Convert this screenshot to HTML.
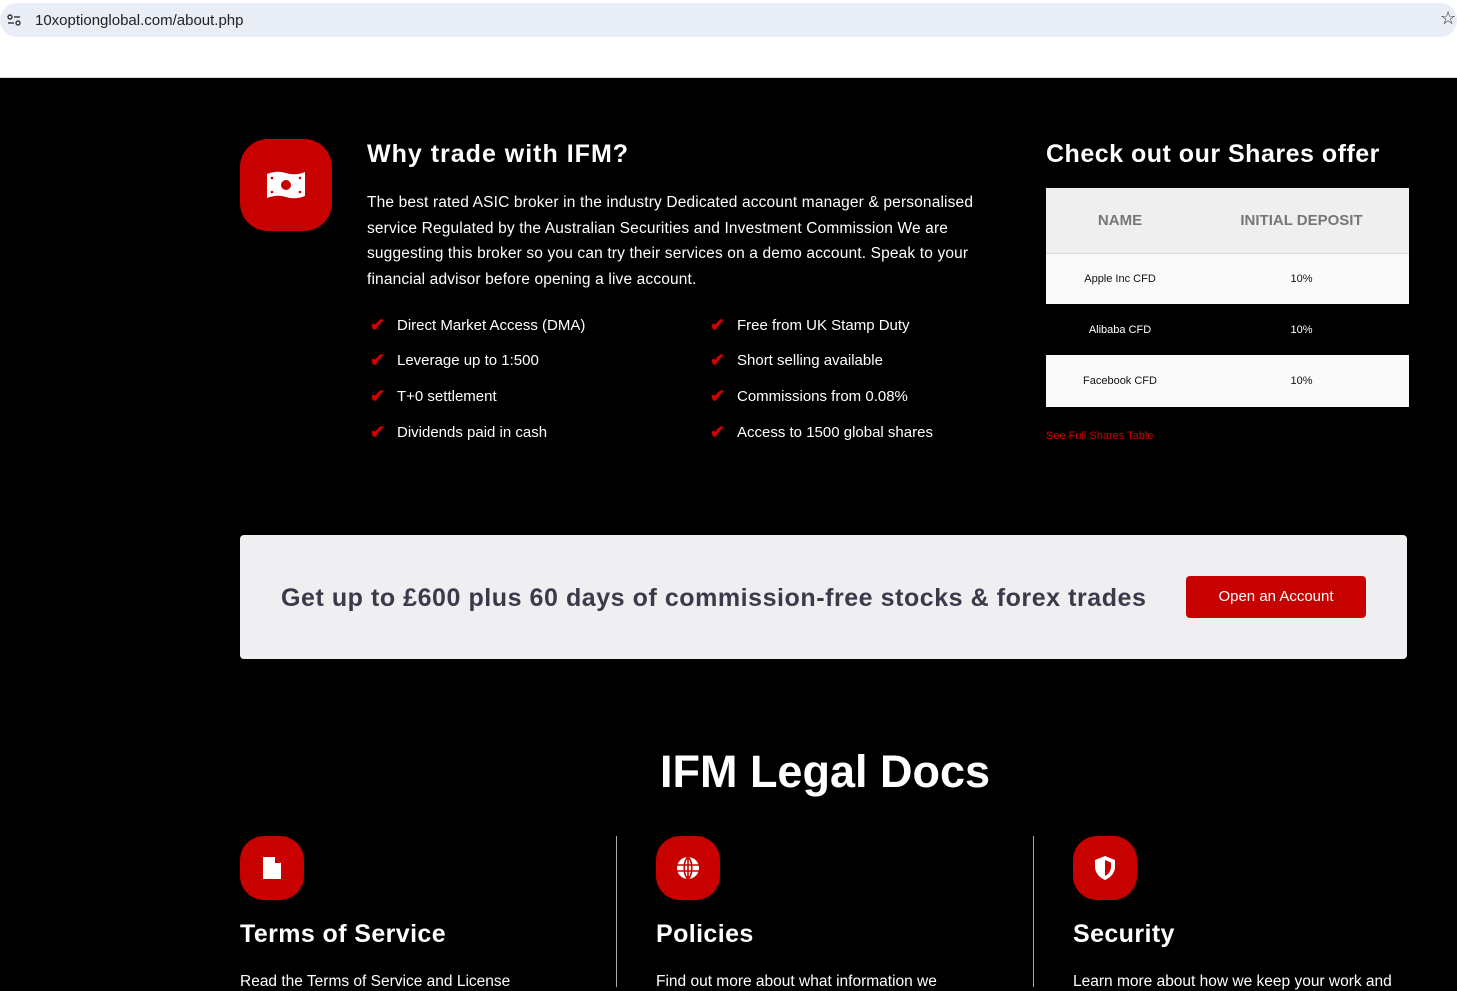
<!DOCTYPE html>
<html><head><meta charset="utf-8"><style>
*{margin:0;padding:0;box-sizing:border-box}
body{width:1457px;height:987px;overflow:hidden;background:#000;font-family:"Liberation Sans",sans-serif;color:#fff;position:relative}
.bar{position:absolute;top:0;left:0;width:1457px;height:78px;background:#fff;border-bottom:1px solid #ddd}
.url{position:absolute;top:3px;left:0;width:1457px;height:34px;background:#e9edf6;border-radius:17px}
.url span{position:absolute;left:35px;top:9px;font-size:15px;color:#222}
.ab{position:absolute}
.ico{background:#c70000;border-radius:24px;display:flex;align-items:center;justify-content:center}
.li{position:absolute;font-size:15px;color:#fff}
.li:before{content:"✔";color:#d40000;position:absolute;left:-27px;top:-2px;font-size:18px;font-weight:bold}
table{border-collapse:collapse}
</style></head><body>
<div class="bar"><div class="url">
<svg style="position:absolute;left:7px;top:11px" width="14" height="12" viewBox="0 0 14 12"><circle cx="3" cy="3" r="2" fill="none" stroke="#333" stroke-width="1.4"/><line x1="7" y1="3" x2="13" y2="3" stroke="#333" stroke-width="1.4"/><line x1="1" y1="9" x2="7" y2="9" stroke="#333" stroke-width="1.4"/><circle cx="11" cy="9" r="2" fill="none" stroke="#333" stroke-width="1.4"/></svg>
<span>10xoptionglobal.com/about.php</span>
<span style="left:1440px;top:5px;font-size:18px">☆</span></div></div>

<div class="ab ico" style="left:240px;top:139px;width:92px;height:92px;border-radius:28px">
<svg width="42" height="30" viewBox="0 0 42 30"><path d="M2 4 Q12 0 21 3 Q30 6 40 2 L40 26 Q30 30 21 27 Q12 24 2 28 Z" fill="#fff"/><circle cx="21" cy="15" r="5" fill="#c70000"/><circle cx="7" cy="8" r="1.3" fill="#c70000"/><circle cx="35" cy="22" r="1.3" fill="#c70000"/><circle cx="7" cy="22" r="1.3" fill="#c70000"/><circle cx="35" cy="8" r="1.3" fill="#c70000"/></svg></div>
<div class="ab" style="left:367px;top:140px;font-size:25px;font-weight:bold;letter-spacing:1px">Why trade with IFM?</div>
<div class="ab" style="left:367px;top:190px;width:630px;font-size:15.5px;line-height:25.7px;letter-spacing:0.15px">The best rated ASIC broker in the industry Dedicated account manager &amp; personalised service Regulated by the Australian Securities and Investment Commission We are suggesting this broker so you can try their services on a demo account. Speak to your financial advisor before opening a live account.</div>
<div class="li" style="left:397px;top:317px">Direct Market Access (DMA)</div>
<div class="li" style="left:397px;top:352px">Leverage up to 1:500</div>
<div class="li" style="left:397px;top:388px">T+0 settlement</div>
<div class="li" style="left:397px;top:424px">Dividends paid in cash</div>
<div class="li" style="left:737px;top:317px">Free from UK Stamp Duty</div>
<div class="li" style="left:737px;top:352px">Short selling available</div>
<div class="li" style="left:737px;top:388px">Commissions from 0.08%</div>
<div class="li" style="left:737px;top:424px">Access to 1500 global shares</div>

<div class="ab" style="left:1046px;top:140px;font-size:25px;font-weight:bold;letter-spacing:0.5px">Check out our Shares offer</div>
<table class="ab" style="left:1046px;top:188px;width:363px;font-size:11px;text-align:center">
<tr style="background:#efefef;height:65px;color:#777;font-size:15px;font-weight:bold;border-bottom:1px solid #ddd"><td style="width:148px">NAME</td><td>INITIAL DEPOSIT</td></tr>
<tr style="background:#fafafa;color:#111;height:51px"><td>Apple Inc CFD</td><td>10%</td></tr>
<tr style="height:51px;color:#fff"><td>Alibaba CFD</td><td>10%</td></tr>
<tr style="background:#fafafa;color:#111;height:52px"><td>Facebook CFD</td><td>10%</td></tr>
</table>
<div class="ab" style="left:1046px;top:430px;font-size:11px;color:#d40000">See Full Shares Table</div>

<div class="ab" style="left:240px;top:535px;width:1167px;height:124px;background:#efeff2;border-radius:4px">
<div class="ab" style="left:41px;top:49px;font-size:25px;font-weight:bold;color:#3a3a4a;letter-spacing:0.55px">Get up to £600 plus 60 days of commission-free stocks &amp; forex trades</div>
<div class="ab" style="left:946px;top:41px;width:180px;height:42px;background:#c70000;border-radius:4px;color:#fff;font-size:15px;text-align:center;line-height:42px">Open an Account</div>
</div>

<div class="ab" style="left:0;width:1650px;top:746px;text-align:center;font-size:45px;font-weight:bold">IFM Legal Docs</div>

<div class="ab" style="left:616px;top:836px;width:1px;height:151px;background:#aaa"></div>
<div class="ab" style="left:1033px;top:836px;width:1px;height:151px;background:#aaa"></div>

<div class="ab ico" style="left:240px;top:836px;width:64px;height:64px"><svg width="18" height="22" viewBox="0 0 18 22"><path d="M0 0H12L18 6V22H0Z" fill="#fff"/><path d="M12 0V6H18" fill="#c70000"/></svg></div>
<div class="ab ico" style="left:656px;top:836px;width:64px;height:64px"><svg width="22" height="22" viewBox="0 0 22 22"><circle cx="11" cy="11" r="11" fill="#fff"/><path d="M0 8H22M0 14H22M11 0V22M11 0C6 4 6 18 11 22M11 0C16 4 16 18 11 22" stroke="#c70000" stroke-width="1.6" fill="none"/></svg></div>
<div class="ab ico" style="left:1073px;top:836px;width:64px;height:64px"><svg width="20" height="24" viewBox="0 0 20 24"><path d="M10 0L20 4V11C20 17 15 22 10 24C5 22 0 17 0 11V4Z" fill="#fff"/><path d="M10 4L16 6.5V11C16 15 13 18.5 10 20Z" fill="#c70000"/></svg></div>

<div class="ab" style="left:240px;top:920px;font-size:25px;font-weight:bold;letter-spacing:0.4px">Terms of Service</div>
<div class="ab" style="left:656px;top:920px;font-size:25px;font-weight:bold;letter-spacing:0.4px">Policies</div>
<div class="ab" style="left:1073px;top:920px;font-size:25px;font-weight:bold;letter-spacing:0.4px">Security</div>
<div class="ab" style="left:240px;top:973px;font-size:15.5px">Read the Terms of Service and License</div>
<div class="ab" style="left:656px;top:973px;font-size:15.5px">Find out more about what information we</div>
<div class="ab" style="left:1073px;top:973px;font-size:15.5px">Learn more about how we keep your work and</div>
</body></html>
